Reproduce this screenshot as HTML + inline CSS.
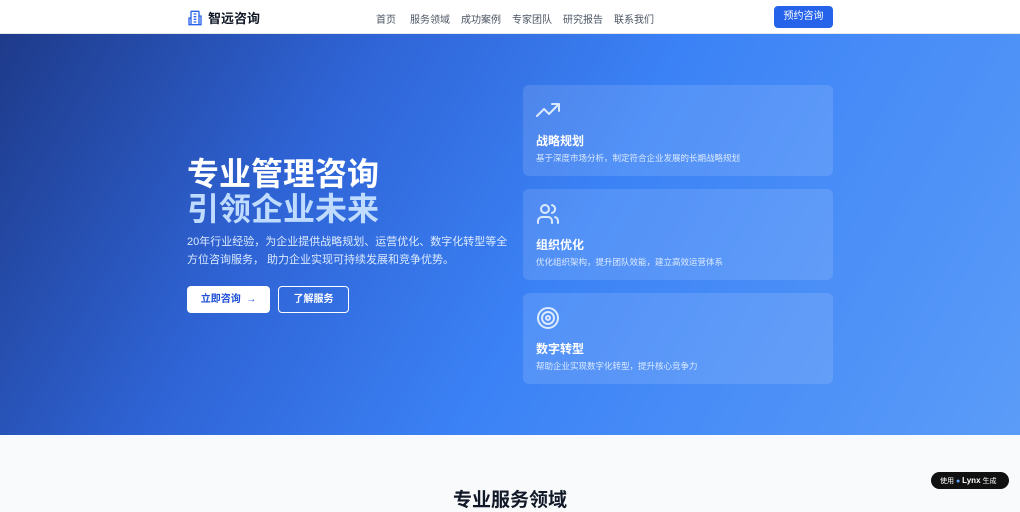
<!DOCTYPE html>
<html><head><meta charset="utf-8"><style>
*{margin:0;padding:0;box-sizing:border-box}
body{width:1020px;height:500px;overflow:hidden;font-family:"Liberation Sans","Noto Sans CJK SC",sans-serif;background:#f8fafc}
.nav{height:34px;background:#fff;position:relative;border-bottom:1px solid #e5e7eb}
.logo{position:absolute;left:187px;top:8px;display:flex;align-items:center;font-size:13px;font-weight:700;color:#111827}
.logo svg{margin-right:5px}
.links span{position:absolute;top:11px;font-size:10px;color:#4b5563}
.cta{position:absolute;left:774px;top:6px;width:59px;height:22px;background:#2563eb;color:#fff;font-size:10px;border-radius:4px;text-align:center;line-height:22px}
.hero{position:absolute;top:34px;left:0;width:1020px;height:401px;background:linear-gradient(120deg,#1e3a8a 0%,#2f64d6 30%,#3b82f6 55%,#5b9cf8 100%)}
h1{position:absolute;left:187px;top:123px;font-size:32px;line-height:35px;color:#fff;font-weight:700}
h1 span{color:#bfdbfe}
.p{position:absolute;left:187px;top:199px;width:326px;font-size:11px;line-height:18px;color:#dbeafe}
.b1{position:absolute;left:187px;top:252px;width:83px;height:27px;background:#fff;border-radius:4px;color:#1d4ed8;font-size:10px;font-weight:700;text-align:center;line-height:27px}
.b2{position:absolute;left:278px;top:252px;width:71px;height:27px;border:1px solid #fff;border-radius:4px;color:#fff;font-size:10px;font-weight:700;text-align:center;line-height:25px}
.card{position:absolute;left:523px;width:310px;height:91px;background:rgba(255,255,255,0.12);border-radius:6px}
.card svg{position:absolute;left:13px;top:13px}
.card b{position:absolute;left:13px;top:47px;font-size:12px;color:#fff}
.card i{position:absolute;left:13px;top:67px;font-size:8.5px;color:#dbeafe;font-style:normal}
h2{position:absolute;top:485px;width:1020px;text-align:center;font-size:19px;color:#111827;font-weight:700}
.badge{position:absolute;left:931px;top:472px;width:78px;height:17px;background:#111;border-radius:9px;color:#fff;font-size:7px;line-height:17px;padding-left:9px}
.badge b{font-size:8px}
</style></head><body>
<div class="nav">
<div class="logo"><svg width="16" height="16" viewBox="0 0 24 24" fill="none" stroke="#2563eb" stroke-width="2"><rect x="6" y="2" width="12" height="20" rx="1"/><path d="M6 12H3v10h3M18 9h3v13h-3M10 6h4M10 10h4M10 14h4M10 18h4"/></svg>智远咨询</div>
<div class="links"><span style="left:376px">首页</span><span style="left:410px">服务领域</span><span style="left:461px">成功案例</span><span style="left:512px">专家团队</span><span style="left:563px">研究报告</span><span style="left:614px">联系我们</span></div>
<div class="cta">预约咨询</div>
</div>
<div class="hero">
<h1>专业管理咨询<br><span>引领企业未来</span></h1>
<div class="p">20年行业经验，为企业提供战略规划、运营优化、数字化转型等全方位咨询服务， 助力企业实现可持续发展和竞争优势。</div>
<div class="b1">立即咨询 &nbsp;→</div>
<div class="b2">了解服务</div>
<div class="card" style="top:51px"><svg width="24" height="24" viewBox="0 0 24 24" fill="none" stroke="#dbeafe" stroke-width="2" stroke-linecap="round" stroke-linejoin="round"><path d="M1 18l7-7 5 5 10-10M16 6h7v7"/></svg><b>战略规划</b><i>基于深度市场分析，制定符合企业发展的长期战略规划</i></div>
<div class="card" style="top:155px"><svg width="24" height="24" viewBox="0 0 24 24" fill="none" stroke="#dbeafe" stroke-width="2" stroke-linecap="round"><circle cx="9" cy="7" r="4"/><path d="M2 21v-2a4 4 0 0 1 4-4h6a4 4 0 0 1 4 4v2M16 3.1a4 4 0 0 1 0 7.8M22 21v-2a4 4 0 0 0-3-3.9"/></svg><b>组织优化</b><i>优化组织架构，提升团队效能，建立高效运营体系</i></div>
<div class="card" style="top:259px"><svg width="24" height="24" viewBox="0 0 24 24" fill="none" stroke="#dbeafe" stroke-width="2"><circle cx="12" cy="12" r="10"/><circle cx="12" cy="12" r="6"/><circle cx="12" cy="12" r="2"/></svg><b>数字转型</b><i>帮助企业实现数字化转型，提升核心竞争力</i></div>
</div>
<h2>专业服务领域</h2>
<div class="badge">使用 <span style="color:#60a5fa">●</span> <b>Lynx</b> 生成</div>
</body></html>
